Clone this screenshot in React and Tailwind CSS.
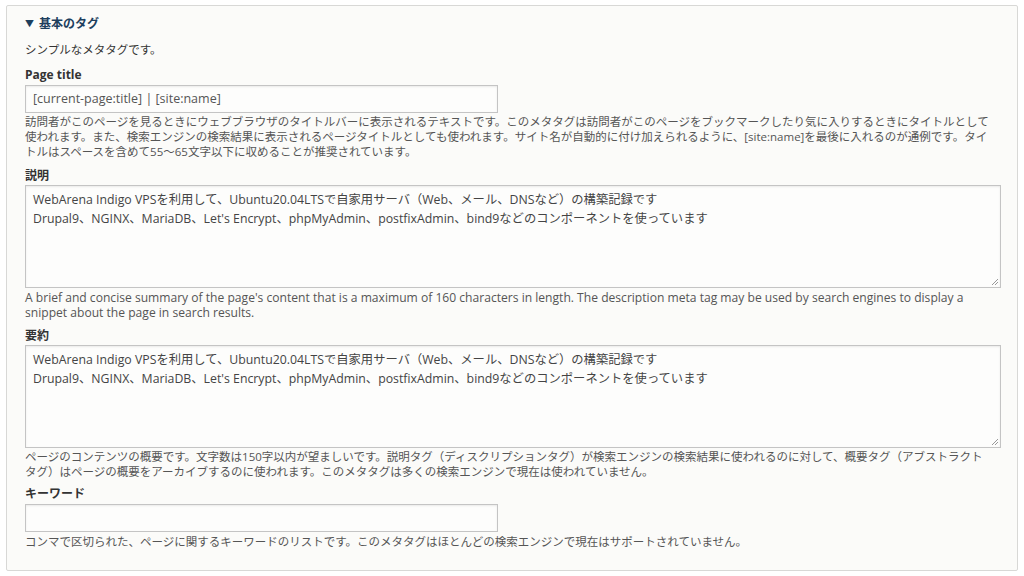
import React from "react";

const font = { fontFamily: '"Open Sans", "Noto Sans CJK JP", sans-serif' };

const descText = [
  "WebArena Indigo VPSを利用して、Ubuntu20.04LTSで自家用サーバ（Web、メール、DNSなど）の構築記録です",
  "Drupal9、NGINX、MariaDB、Let's Encrypt、phpMyAdmin、postfixAdmin、bind9などのコンポーネントを使っています",
];

const Label = ({ children, className = "" }) => (
  <div className={`text-[12px] leading-[16px] font-bold text-[#333] ${className}`}>{children}</div>
);

const Help = ({ lines, className = "" }) => (
  <div className={`text-[11.5px] leading-[15px] text-[#555] ${className}`}>
    {lines.map((l, i) => (
      <div key={i} className="whitespace-nowrap">{l}</div>
    ))}
  </div>
);

const TextArea = ({ lines }) => (
  <div className="relative w-[976px] h-[103px] border border-[#c4c4c4] bg-[#fdfdfc] shadow-[inset_0_1px_2px_rgba(0,0,0,0.08)] px-[7px] py-[4px] text-[12.3px] leading-[19px] text-[#444]">
    {lines.map((l, i) => (
      <div key={i} className="whitespace-nowrap">{l}</div>
    ))}
    {/* resize grip */}
    <svg className="absolute right-[1px] bottom-[1px]" width="9" height="9" viewBox="0 0 9 9">
      <path d="M8 2 L2 8 M8 5 L5 8" stroke="#999" strokeWidth="1" />
    </svg>
  </div>
);

const TextInput = ({ value }) => (
  <div className="w-[473px] h-[28px] border border-[#c4c4c4] bg-[#fdfdfc] shadow-[inset_0_1px_2px_rgba(0,0,0,0.08)] px-[7px] flex items-center text-[12.5px] text-[#555]">
    {value}
  </div>
);

export default function App() {
  return (
    <div className="w-[1024px] h-[576px] bg-white pl-[6px] pt-[5px]" style={font}>
      <div className="w-[1012px] h-[566px] border border-[#d8d8d6] rounded-[2px] bg-[#fbfbf9] px-[18px] pt-[10px]">
        {/* summary */}
        <div className="flex items-center gap-[5px] text-[12px] leading-[16px] font-bold text-[#1d3f5e]">
          <span className="text-[9px]">▼</span>
          <span>基本のタグ</span>
        </div>
        <div className="mt-[10px] text-[11.5px] leading-[16px] text-[#333]">シンプルなメタタグです。</div>

        {/* page title */}
        <Label className="mt-[9px]">Page title</Label>
        <div className="mt-[2px]">
          <TextInput value="[current-page:title] | [site:name]" />
        </div>
        <Help
          className="mt-[1px]"
          lines={[
            "訪問者がこのページを見るときにウェブブラウザのタイトルバーに表示されるテキストです。このメタタグは訪問者がこのページをブックマークしたり気に入りするときにタイトルとして",
            "使われます。また、検索エンジンの検索結果に表示されるページタイトルとしても使われます。サイト名が自動的に付け加えられるように、[site:name]を最後に入れるのが通例です。タイ",
            "トルはスペースを含めて55～65文字以下に収めることが推奨されています。",
          ]}
        />

        {/* description */}
        <Label className="mt-[9px]">説明</Label>
        <div className="mt-[1px]">
          <TextArea lines={descText} />
        </div>
        <Help
          className="mt-[2px] text-[12.1px]"
          lines={[
            "A brief and concise summary of the page's content that is a maximum of 160 characters in length. The description meta tag may be used by search engines to display a",
            "snippet about the page in search results.",
          ]}
        />

        {/* abstract */}
        <Label className="mt-[8px]">要約</Label>
        <div className="mt-[1px]">
          <TextArea lines={descText} />
        </div>
        <Help
          className="mt-[1px]"
          lines={[
            "ページのコンテンツの概要です。文字数は150字以内が望ましいです。説明タグ（ディスクリプションタグ）が検索エンジンの検索結果に使われるのに対して、概要タグ（アブストラクト",
            "タグ）はページの概要をアーカイブするのに使われます。このメタタグは多くの検索エンジンで現在は使われていません。",
          ]}
        />

        {/* keywords */}
        <Label className="mt-[7px]">キーワード</Label>
        <div className="mt-[2px]">
          <TextInput value="" />
        </div>
        <Help
          className="mt-[2px]"
          lines={["コンマで区切られた、ページに関するキーワードのリストです。このメタタグはほとんどの検索エンジンで現在はサポートされていません。"]}
        />
      </div>
    </div>
  );
}
